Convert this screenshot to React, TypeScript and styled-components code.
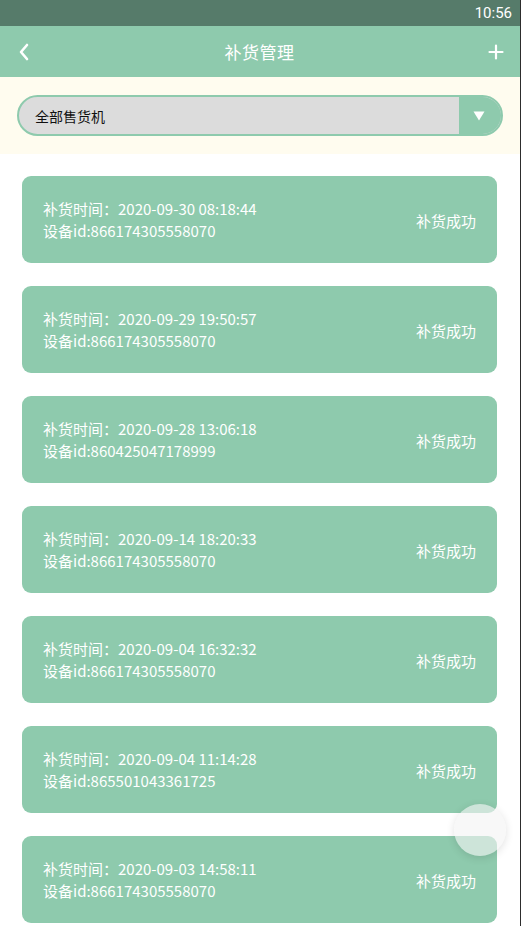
import React from "react";
import styled, { createGlobalStyle } from "styled-components";

const GlobalStyle = createGlobalStyle`
    html, body {
        margin: 0;
        padding: 0;
        background: #ffffff;
    }
    body {
        font-family: "Noto Sans CJK SC", "Noto Sans", sans-serif;
    }
`

const PageWrapper = styled.div`
    width: 521px;
    height: 926px;
    overflow: hidden;
    position: relative;
    box-sizing: border-box;
    border-right: 1px solid #2d2d2d;
    background-color: #ffffff;
`

const StatusBar = styled.div`
    height: 26px;
    background-color: #567b6a;
    display: flex;
    align-items: center;
    justify-content: flex-end;
    padding-right: 8px;
    color: #ffffff;
    font-family: Roboto, "Noto Sans", sans-serif;
    font-size: 15px;
`

const Header = styled.div`
    height: 51px;
    background-color: #8ecaad;
    display: flex;
    align-items: center;
    justify-content: space-between;
    padding: 0 16px 0 17px;
    color: #ffffff;

    & > .title {
        font-size: 17px;
        letter-spacing: 0.5px;
    }

    & > svg {
        display: block;
    }
`

const FilterBar = styled.div`
    height: 77px;
    background-color: #fffcef;
    display: flex;
    align-items: center;
    padding: 0 17px 0 17px;
`

const Select = styled.div`
    flex: 1;
    height: 41px;
    box-sizing: border-box;
    border: 2px solid #8ecaad;
    border-radius: 21px;
    overflow: hidden;
    display: flex;
    background-color: #dcdcdc;

    & > .label {
        flex: 1;
        display: flex;
        align-items: center;
        padding-left: 16px;
        font-size: 14px;
        color: #111111;
    }

    & > .arrow {
        width: 40px;
        background-color: #8ecaad;
        display: flex;
        align-items: center;
        justify-content: center;
        padding-right: 2px;
    }
`

const List = styled.div`
    display: flex;
    flex-direction: column;
    gap: 23px;
    padding: 22px 23px 0 22px;
`

const Card = styled.div`
    height: 87px;
    flex-shrink: 0;
    border-radius: 9px;
    background-color: #8ecaad;
    display: flex;
    align-items: center;
    justify-content: space-between;
    padding: 0 21px 0 21px;
    color: #ffffff;
    font-size: 15px;

    & > .info {
        line-height: 22px;
    }

    & > .status {
        font-size: 15px;
        padding-top: 1px;
    }
`

const FloatButton = styled.div`
    position: absolute;
    left: 454px;
    top: 804px;
    width: 52px;
    height: 52px;
    border-radius: 50%;
    background-color: rgba(243, 243, 243, 0.62);
    box-shadow: 0 2px 8px rgba(0, 0, 0, 0.12);
`

interface Record {
    time: string;
    device: string;
}

const records: Record[] = [
    { time: "2020-09-30 08:18:44", device: "866174305558070" },
    { time: "2020-09-29 19:50:57", device: "866174305558070" },
    { time: "2020-09-28 13:06:18", device: "860425047178999" },
    { time: "2020-09-14 18:20:33", device: "866174305558070" },
    { time: "2020-09-04 16:32:32", device: "866174305558070" },
    { time: "2020-09-04 11:14:28", device: "865501043361725" },
    { time: "2020-09-03 14:58:11", device: "866174305558070" },
];

// Restock records page
export default function App() {
    return (
        <PageWrapper>
            <GlobalStyle />
            <StatusBar>10:56</StatusBar>
            <Header>
                <svg width="14" height="18" viewBox="0 0 14 18">
                    <path d="M10 2 L4 9 L10 16" fill="none" stroke="#ffffff" strokeWidth="2.6" strokeLinecap="round" strokeLinejoin="round" />
                </svg>
                <div className="title">补货管理</div>
                <svg width="16" height="16" viewBox="0 0 16 16">
                    <path d="M8 1.5 V14.5 M1.5 8 H14.5" fill="none" stroke="#ffffff" strokeWidth="2.2" strokeLinecap="round" />
                </svg>
            </Header>
            <FilterBar>
                <Select>
                    <div className="label">全部售货机</div>
                    <div className="arrow">
                        <svg width="12" height="10" viewBox="0 0 12 10">
                            <path d="M0.5 0.5 H11.5 L6 9.5 Z" fill="#ffffff" />
                        </svg>
                    </div>
                </Select>
            </FilterBar>
            <List>
                {
                    records.map((r, idx) =>
                        <Card key={idx}>
                            <div className="info">
                                <div>补货时间：{r.time}</div>
                                <div>设备id:{r.device}</div>
                            </div>
                            <div className="status">补货成功</div>
                        </Card>
                    )
                }
            </List>
            <FloatButton />
        </PageWrapper>
    )
}
